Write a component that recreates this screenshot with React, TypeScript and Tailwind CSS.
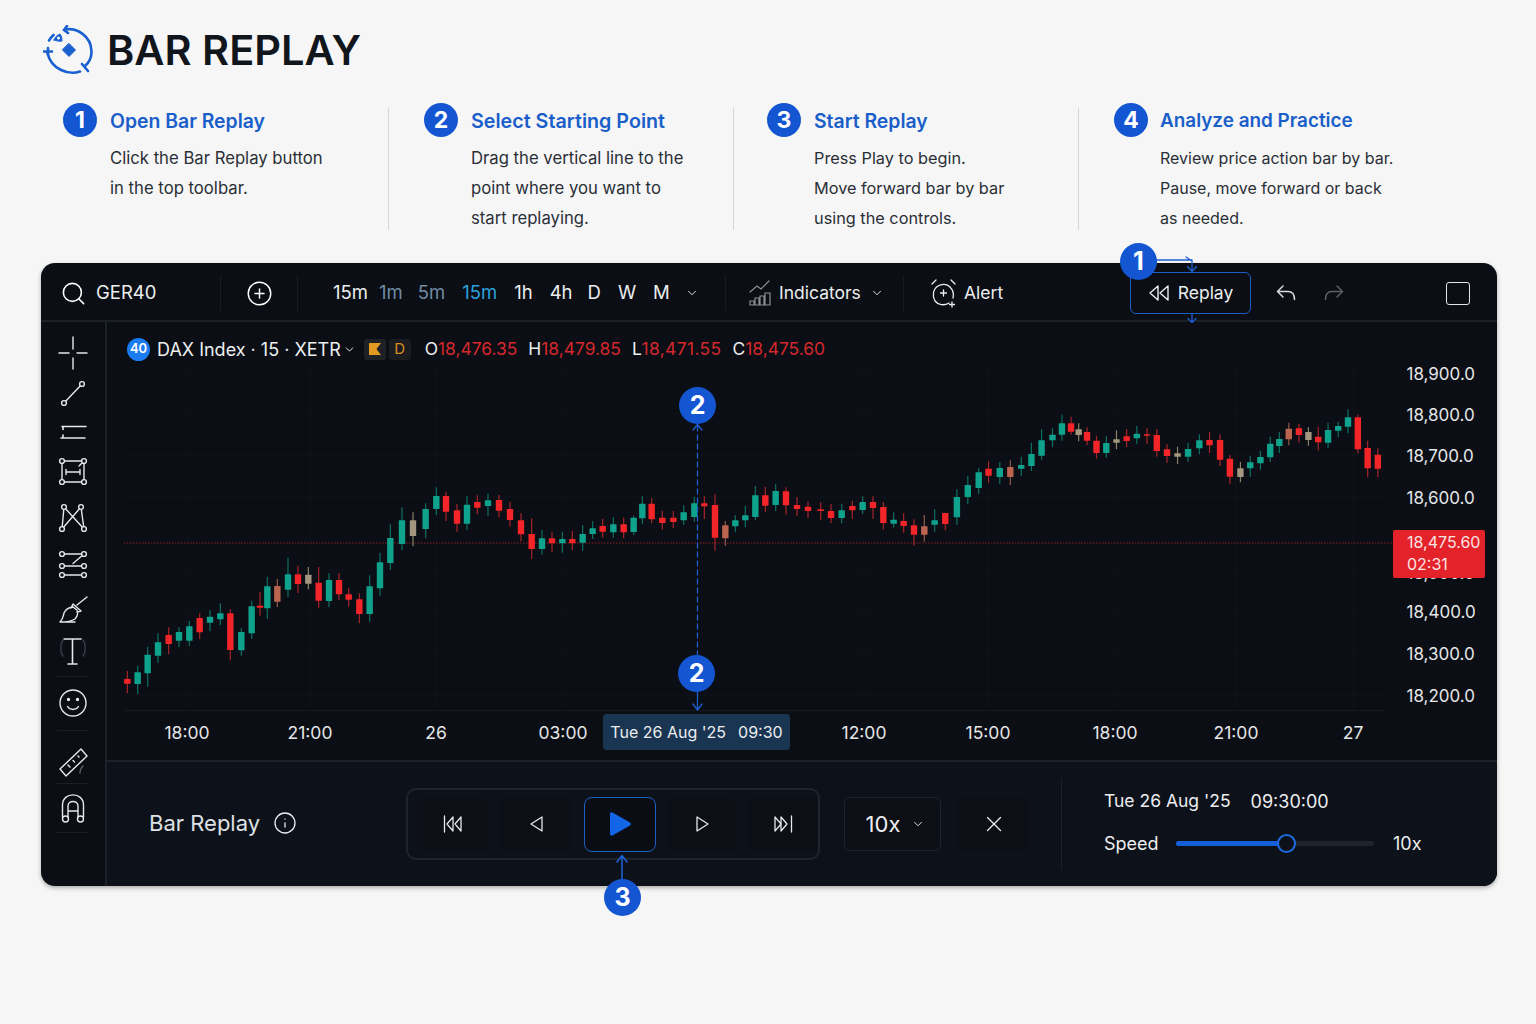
import { ChevronDown, Info, Search, CirclePlus, X } from "lucide-react";

type Kind = "r" | "g" | "t" | "o";
type Raw = [number, number, number, number, number, Kind];

// candle readings, grouped by the crop they were read from
const groupA: Raw[] = [
  [52, 627, 641, 603, 670, "r"], [83, 607, 642, 587, 672, "g"], [113, 554, 610, 530, 650, "g"], [144, 517, 557, 490, 578, "g"],
  [176, 495, 522, 472, 553, "r"], [207, 486, 512, 472, 532, "g"], [238, 469, 512, 452, 528, "g"], [269, 444, 487, 430, 507, "r"],
  [300, 440, 458, 421, 484, "g"], [331, 430, 448, 400, 465, "g"], [361, 430, 540, 418, 571, "r"], [394, 486, 541, 474, 557, "g"],
  [425, 409, 490, 392, 507, "g"], [450, 407, 413, 366, 437, "r"], [472, 349, 415, 320, 447, "g"], [502, 348, 395, 327, 411, "o"],
  [534, 313, 359, 264, 381, "g"], [564, 313, 342, 287, 369, "r"], [595, 314, 341, 291, 358, "t"], [626, 338, 392, 291, 413, "r"],
  [657, 330, 393, 310, 412, "g"], [687, 330, 373, 309, 391, "r"], [716, 373, 389, 353, 410, "r"], [748, 388, 432, 370, 460, "r"],
  [779, 349, 432, 316, 455, "g"], [810, 277, 355, 248, 377, "g"], [841, 204, 279, 163, 299, "g"], [876, 151, 222, 112, 241, "g"],
  [909, 151, 198, 127, 229, "t"], [947, 117, 177, 100, 205, "g"], [979, 78, 117, 52, 135, "g"], [1008, 78, 125, 65, 153, "r"],
  [1041, 121, 161, 102, 185, "r"], [1071, 104, 161, 78, 180, "g"], [1102, 96, 113, 76, 132, "r"], [1134, 91, 108, 71, 138, "g"],
  [1167, 90, 122, 75, 142, "r"], [1200, 117, 150, 95, 170, "r"], [1233, 151, 193, 130, 214, "r"],
];
const groupB: Raw[] = [
  [35, 192, 237, 145, 267, "r"], [66, 205, 237, 180, 254, "g"], [96, 205, 220, 185, 246, "r"], [127, 207, 220, 185, 248, "g"],
  [157, 207, 220, 183, 240, "r"], [188, 192, 218, 165, 242, "g"], [218, 175, 192, 154, 207, "g"], [248, 168, 185, 146, 203, "r"],
  [280, 163, 187, 142, 203, "g"], [311, 163, 187, 143, 205, "r"], [341, 143, 186, 137, 195, "g"], [367, 101, 145, 79, 163, "g"],
  [395, 101, 148, 85, 160, "r"], [427, 143, 159, 122, 179, "r"], [460, 143, 156, 123, 175, "r"], [491, 127, 151, 106, 165, "g"],
  [523, 100, 141, 80, 155, "g"], [553, 100, 109, 79, 147, "r"], [585, 105, 203, 73, 242, "r"], [616, 166, 205, 153, 228, "o"],
  [646, 151, 169, 136, 187, "g"], [676, 136, 151, 108, 172, "g"], [706, 76, 141, 48, 150, "g"], [736, 76, 107, 50, 126, "r"],
  [767, 63, 105, 42, 123, "g"], [798, 64, 106, 52, 134, "r"], [831, 105, 117, 81, 138, "r"], [864, 110, 123, 94, 144, "r"],
  [902, 118, 123, 97, 150, "r"], [933, 123, 144, 102, 160, "r"], [965, 121, 144, 101, 160, "g"], [997, 108, 121, 92, 147, "r"],
  [1028, 96, 120, 79, 132, "g"], [1059, 96, 114, 79, 147, "r"], [1090, 111, 159, 96, 179, "r"], [1121, 149, 161, 127, 173, "g"],
  [1151, 153, 168, 130, 188, "r"], [1182, 166, 194, 148, 227, "r"], [1213, 169, 194, 135, 215, "o"], [1244, 151, 164, 118, 185, "g"],
];
const groupC: Raw[] = [
  [42, 339, 372, 338, 391, "r"], [74, 291, 352, 268, 374, "g"], [104, 255, 291, 227, 312, "g"], [134, 217, 264, 203, 282, "g"],
  [161, 206, 227, 184, 248, "r"], [192, 204, 231, 186, 252, "g"], [221, 201, 231, 181, 255, "o"], [251, 195, 206, 170, 228, "g"],
  [279, 162, 198, 128, 213, "g"], [307, 121, 167, 88, 180, "g"], [337, 104, 121, 85, 142, "g"], [363, 70, 104, 44, 122, "g"],
  [388, 70, 95, 50, 104, "r"], [409, 88, 105, 70, 124, "t"], [432, 96, 122, 82, 136, "r"], [458, 122, 159, 107, 176, "r"],
  [485, 129, 159, 108, 173, "g"], [513, 118, 128, 91, 148, "t"], [541, 109, 123, 87, 142, "r"], [569, 101, 115, 78, 132, "g"],
  [597, 103, 107, 84, 132, "r"], [624, 105, 153, 87, 170, "r"], [652, 148, 168, 133, 189, "r"], [681, 160, 170, 140, 192, "t"],
  [710, 147, 170, 128, 186, "g"], [741, 121, 145, 103, 163, "g"], [769, 120, 136, 97, 159, "r"], [798, 120, 179, 103, 198, "r"],
  [825, 176, 230, 165, 252, "r"], [854, 205, 231, 186, 247, "t"], [881, 187, 205, 168, 230, "g"], [909, 171, 190, 152, 209, "g"],
  [936, 131, 172, 110, 186, "g"], [961, 117, 138, 95, 159, "g"], [987, 86, 118, 68, 136, "o"], [1015, 85, 105, 72, 128, "r"],
  [1041, 96, 120, 82, 137, "t"], [1068, 110, 127, 80, 152, "r"], [1095, 90, 128, 68, 144, "g"], [1123, 78, 92, 65, 112, "g"],
  [1150, 52, 80, 28, 99, "g"], [1177, 52, 148, 44, 160, "r"], [1204, 144, 205, 122, 232, "r"], [1232, 164, 206, 145, 231, "r"],
];

const bodyColor: Record<Kind, string> = { r: "#f42528", g: "#0fa38d", t: "#a3977f", o: "#bb6550" };
const wickColor: Record<Kind, string> = { r: "#a5252a", g: "#0c6f63", t: "#8b8069", o: "#94584a" };

const candles = [
  ...groupA.map((c) => ({ x: 110 + c[0] / 3, oy: 470, c })),
  ...groupB.map((c) => ({ x: 520 + c[0] / 3, oy: 470, c })),
  ...groupC.map((c) => ({ x: 930 + c[0] / 2.751, oy: 400, c })),
];

const prices = [
  { label: "18,900.0", y: 375 }, { label: "18,800.0", y: 416 }, { label: "18,700.0", y: 457 }, { label: "18,600.0", y: 499 },
  { label: "18,500.0", y: 574 }, { label: "18,400.0", y: 613 }, { label: "18,300.0", y: 655 }, { label: "18,200.0", y: 697 },
];
const times = [
  { label: "18:00", x: 187 }, { label: "21:00", x: 310 }, { label: "26", x: 436 }, { label: "03:00", x: 563 },
  { label: "12:00", x: 864 }, { label: "15:00", x: 988 }, { label: "18:00", x: 1115 }, { label: "21:00", x: 1236 }, { label: "27", x: 1353 },
];

const steps = [
  { n: 1, title: "Open Bar Replay", lines: ["Click the Bar Replay button", "in the top toolbar."], cls: "w-[325px]", titleCls: "text-[19.400px]", bodyCls: "text-[16.700px]" },
  { n: 2, title: "Select Starting Point", lines: ["Drag the vertical line to the", "point where you want to", "start replaying."], cls: "w-[344px] pl-[35px]", titleCls: "text-[19.700px]", bodyCls: "text-[16.700px]" },
  { n: 3, title: "Start Replay", lines: ["Press Play to begin.", "Move forward bar by bar", "using the controls."], cls: "w-[344px] pl-[33px]", titleCls: "text-[19.400px]", bodyCls: "text-[16.300px]" },
  { n: 4, title: "Analyze and Practice", lines: ["Review price action bar by bar.", "Pause, move forward or back", "as needed."], cls: "pl-[35px]", titleCls: "-ml-px text-[18.900px]", bodyCls: "-ml-px text-[16px]" },
];

function Badge({ n, className }: { n: number; className: string }) {
  return (
    <div className={`absolute flex h-[37px] w-[37px] items-center justify-center rounded-full bg-[#1456d2] text-[25px] font-bold text-white ${className}`}>
      {n}
    </div>
  );
}

function LogoIcon() {
  return (
    <svg width="50" height="50" viewBox="0 0 50 50" fill="none" stroke="#1a5fd0" strokeWidth="2.6" strokeLinecap="round">
      <path d="M22 4.500C34 2.500 48 11 48.500 26c.2 7-3 12-6.500 15M37 46.500C25 50.500 8 44 4.500 28M6 15.500c1.500-2.500 3-4 4.500-5.500" />
      <path d="M24 1l-3 4 4 3M1 26.500h8M5 23v7M39 39l6 7" />
      <path d="M26 18.500l6.500 6.500-6.500 6.500-6.500-6.500z" fill="#1a5fd0" strokeWidth="1" />
      <path d="M11 15c1.500-3.500 3.500-5 6-6 1.500 2 2 4 2 7-3 .5-5.500 0-8-1z" fill="#1a5fd0" strokeWidth="1" />
      <circle cx="15.500" cy="13" r="1.500" fill="#f6f6f7" stroke="none" />
    </svg>
  );
}

function ToolIcon({ children, className = "" }: { children: React.ReactNode; className?: string }) {
  return (
    <svg width="36" height="36" viewBox="0 0 36 36" fill="none" stroke="#e6e8ea" strokeWidth="1.400" strokeLinecap="round" strokeLinejoin="round" className={className}>
      {children}
    </svg>
  );
}

function Dots({ pts }: { pts: [number, number][] }) {
  return (
    <>
      {pts.map(([x, y]) => (
        <circle key={`${x}-${y}`} cx={x} cy={y} r="2.400" fill="#0b0e14" />
      ))}
    </>
  );
}

function Sidebar() {
  return (
    <div className="flex w-[66px] shrink-0 flex-col items-center border-r-2 border-[#1c2027] pt-[13px]">
      <ToolIcon><path d="M4 18h10M22 18h10M18 2v12M18 23v11" /></ToolIcon>
      <ToolIcon className="mt-[5px]">
        <path d="M9 27L27 8" /><Dots pts={[[9, 27], [27, 8]]} />
      </ToolIcon>
      <ToolIcon className="mt-[2px]">
        <path d="M7 12.500h24M6 24h24M8 12.500v3M8 21v3" strokeWidth="1.600" />
      </ToolIcon>
      <ToolIcon className="mt-[3px]">
        <path d="M7 8h22v21H7zM11 19h14M11 16.500v5M25 16.500v5M24 13l4-4" />
        <Dots pts={[[7, 8], [29, 8], [7, 29], [29, 29]]} />
      </ToolIcon>
      <ToolIcon className="mt-[10px]">
        <path d="M9 8l20 22M26 8L7 30M9 8L7 30M26 8l3 22" />
        <Dots pts={[[9, 8], [26, 8], [7, 30], [29, 30]]} />
      </ToolIcon>
      <ToolIcon className="mt-[12px]">
        <path d="M7 7h22L18 16.500M7 19h22M7 28h22" />
        <Dots pts={[[7, 7], [29, 7], [7, 19], [29, 19], [7, 28], [29, 28]]} />
      </ToolIcon>
      <ToolIcon className="mt-[7px]">
        <path d="M5 32c6 0 12-1 15-3 3-3 3-7 2-9l-4-3c-4 0-8 3-9 6-1 4-1 6-4 9zM5 32h15M16 18l2-4 8 7-4 1M22 15l10-8" />
      </ToolIcon>
      <ToolIcon className="mt-[6px]">
        <path d="M9 7h17M17.500 7v25M13 32h9" strokeWidth="1.600" />
        <path d="M8 8c-3 4-3 12 0 16M28 8c3 4 3 12 0 16" stroke="#3a3f47" />
      </ToolIcon>
      <div className="mt-[8px] h-px w-[32px] bg-[#1a1e25]" />
      <ToolIcon className="mt-[8px]">
        <circle cx="18" cy="18" r="13" /><path d="M12.500 21.500c2.500 4 8.500 4 11 0" />
        <circle cx="13.500" cy="14.500" r="1" fill="#e6e8ea" /><circle cx="22.500" cy="14.500" r="1" fill="#e6e8ea" />
      </ToolIcon>
      <div className="mt-[9px] h-px w-[32px] bg-[#1a1e25]" />
      <ToolIcon className="mt-[10px]">
        <path d="M5 31L26 11l6 7-21 20z" transform="translate(0 -3)" />
        <path d="M13 24l2 2M18 19.500l1.500 1.500M23 15l1 1" />
        <path d="M25 32c0-3 1-5 3-7" stroke="#5a5f66" />
      </ToolIcon>
      <div className="mt-[6px] h-px w-[32px] bg-[#1a1e25]" />
      <ToolIcon className="mt-[6px]">
        <path d="M7.500 27V15c0-13.500 21-13.500 21 0v12M13 27V16c0-6 10-6 10 0v11M13 21h10" />
        <circle cx="10.500" cy="29" r="3" /><circle cx="25.500" cy="29" r="3" />
      </ToolIcon>
      <div className="mt-[6px] h-px w-[32px] bg-[#1a1e25]" />
    </div>
  );
}

function Toolbar() {
  return (
    <div className="flex h-[59px] shrink-0 items-center border-b-2 border-[#1c2027] pt-[3px] text-[18.500px] text-[#eceef0]">
      <div className="flex w-[179px] items-center pl-[19px]">
        <Search size={27} strokeWidth={1.400} className="text-white" />
        <span className="ml-[9px]">GER40</span>
      </div>
      <div className="h-[36px] w-px bg-[#181c22]" />
      <div className="flex w-[76px] justify-center">
        <CirclePlus size={27} strokeWidth={1.300} className="text-white" />
      </div>
      <div className="h-[36px] w-px bg-[#181c22]" />
      <div className="flex w-[427px] items-center pl-[35px]">
        <span>15m</span>
        <span className="ml-[11px] text-[#6f8ba3]">1m</span>
        <span className="ml-[15px] text-[#6f8ba3]">5m</span>
        <span className="ml-[17px] text-[#2ba0dc]">15m</span>
        <span className="ml-[17px]">1h</span>
        <span className="ml-[17px]">4h</span>
        <span className="ml-[15px]">D</span>
        <span className="ml-[17px]">W</span>
        <span className="ml-[17px]">M</span>
        <ChevronDown size={14} strokeWidth={1.600} className="ml-[15px]" />
      </div>
      <div className="h-[36px] w-px bg-[#181c22]" />
      <div className="flex w-[177px] items-center pl-[22px] text-[17.500px]">
        <svg width="24" height="26" viewBox="0 0 24 26" fill="none" stroke="#8b9096" strokeWidth="1.200" strokeLinecap="round">
          <path d="M2 12l7-6 4 3 8-8M2 25v-4h4v4zM7 25v-7h4v7zM12 25v-9h4v9zM17 25V13h5v12z" />
        </svg>
        <span className="ml-[7px]">Indicators</span>
        <ChevronDown size={14} strokeWidth={1.600} className="ml-[9px]" />
      </div>
      <div className="h-[36px] w-px bg-[#181c22]" />
      <div className="flex w-[226px] items-center pl-[26px] text-[17.500px]">
        <svg width="27" height="30" viewBox="0 0 27 30" fill="none" stroke="#eceef0" strokeWidth="1.300" strokeLinecap="round">
          <path d="M19 25c-5 3-11 2-14-2-3-5-2-12 3-15 4-2.500 9-2 12 1 3 3 4 7 3 11" />
          <path d="M2 6l4-4M25 6l-4-4M13.500 12v6M10.500 15h6M22 24v5M19.500 26.500h5" />
        </svg>
        <span className="ml-[7px]">Alert</span>
      </div>
      <div className="flex h-[42px] w-[121px] items-center justify-center rounded-[6px] border border-[#1c5fc4] text-[17.500px]">
        <svg width="22" height="18" viewBox="0 0 22 18" fill="none" stroke="#eceef0" strokeWidth="1.400" strokeLinejoin="round">
          <path d="M10 2L2 9l8 7zM20 2l-8 7 8 7z" />
        </svg>
        <span className="ml-[8px]">Replay</span>
      </div>
      <svg width="22" height="22" viewBox="0 0 22 22" fill="none" stroke="#d8dadd" strokeWidth="1.500" strokeLinecap="round" strokeLinejoin="round" className="ml-[24px]">
        <path d="M8 4L2.500 9.500 8 15M2.500 9.500H13c4 0 6.500 2.500 6.500 8" />
      </svg>
      <svg width="22" height="22" viewBox="0 0 22 22" fill="none" stroke="#5b6067" strokeWidth="1.500" strokeLinecap="round" strokeLinejoin="round" className="ml-[26px]">
        <path d="M14 4l5.500 5.500L14 15M19.500 9.500H9c-4 0-6.500 2.500-6.500 8" />
      </svg>
      <div className="ml-[101px] h-[23px] w-[24px] rounded-[3px] border-[1.500px] border-[#e3e5e7]" />
    </div>
  );
}

function Chart() {
  return (
    <div className="relative h-[438px] shrink-0 overflow-hidden rounded-tl-[6px]">
      {/* chart drawing, coordinates are page pixels */}
      <svg className="absolute inset-0" width="1390" height="438" viewBox="107 322 1390 438" fill="none">
        {[373, 414, 455, 497, 570, 611, 653, 695].map((y) => (
          <path key={y} d={`M124 ${y}H1385`} stroke="#ffffff" strokeOpacity="0.025" />
        ))}
        {[187, 310, 436, 563, 864, 988, 1115, 1236, 1353].map((x) => (
          <path key={x} d={`M${x} 365V710`} stroke="#ffffff" strokeOpacity="0.025" />
        ))}
        <path d="M124 710.500H1385" stroke="#ffffff" strokeOpacity="0.05" />
        <path d="M124 543H1393" stroke="#8c2127" strokeDasharray="1.500 1.500" />
        {candles.map(({ x, oy, c }) => {
          const [, top, bot, wt, wb, kind] = c;
          return (
            <g key={`${x}`}>
              <path d={`M${x} ${oy + wt / 3}V${oy + wb / 3}`} stroke={wickColor[kind]} strokeWidth="1.200" />
              <rect x={x - 3.200} y={oy + top / 3} width="6.400" height={(bot - top) / 3} rx="0.500" fill={bodyColor[kind]} />
            </g>
          );
        })}
      </svg>

      <div className="relative flex h-[54px] items-center pl-[20px] text-[18px] text-[#eceef0]">
        <div className="flex h-[23px] w-[23px] items-center justify-center rounded-full bg-[#1b7cf0] text-[13px] font-semibold text-white">40</div>
        <span className="ml-[7px]">DAX Index · 15 · XETR</span>
        <ChevronDown size={13} strokeWidth={1.800} className="ml-[2px]" />
        <div className="ml-[8px] flex h-[21px] w-[22px] items-center justify-center rounded-[3px] bg-[#1e2126]">
          <svg width="14" height="14" viewBox="0 0 14 14"><path d="M1 1h12L8.500 7 13 13H1z" fill="#e39a22" /></svg>
        </div>
        <div className="ml-[3px] flex h-[21px] w-[22px] items-center justify-center rounded-[3px] bg-[#1a1c20] text-[15px] text-[#d98d1f]">D</div>
        <div className="ml-[14px] flex text-[17.400px]">
          <span>O<span className="text-[#d4282d]">18,476.35</span></span>
          <span className="ml-[11px]">H<span className="text-[#d4282d]">18,479.85</span></span>
          <span className="ml-[11px] tracking-[0.4px]">L<span className="text-[#d4282d]">18,471.55</span></span>
          <span className="ml-[11px]">C<span className="text-[#d4282d]">18,475.60</span></span>
        </div>
      </div>

      {prices.map((p) => (
        <span key={p.y} className="absolute left-[1299.500px] -translate-y-1/2 text-[17px] text-[#e4e6e8]" style={{ top: p.y - 322 }}>
          {p.label}
        </span>
      ))}
      <div className="absolute left-[1286px] top-[208px] flex h-[48px] w-[92px] flex-col justify-center rounded-[2px] bg-[#e4222a] pb-[2px] pl-[14px] text-[16px] leading-[22px] text-[#fbe4e4]">
        <span>18,475.60</span>
        <span>02:31</span>
      </div>

      {times.map((t) => (
        <span key={t.x} className="absolute top-[398px] -translate-x-1/2 text-[17.500px] text-[#e4e6e8]" style={{ left: t.x - 107 }}>
          {t.label}
        </span>
      ))}
      <div className="absolute left-[496px] top-[392px] flex h-[36px] w-[187px] items-center justify-center whitespace-nowrap rounded-[4px] bg-[#1a3552] text-[16px] text-[#eceef0]">
        <span>Tue 26 Aug '25</span>
        <span className="ml-[12px]">09:30</span>
      </div>
    </div>
  );
}

function TransportIcon({ d }: { d: string }) {
  return (
    <svg width="24" height="24" viewBox="0 0 24 24" fill="none" stroke="#e6e8ea" strokeWidth="1.300" strokeLinejoin="round" strokeLinecap="round">
      <path d={d} />
    </svg>
  );
}

function ReplayPanel() {
  return (
    <div className="flex h-[126px] flex-1 items-center border-t-2 border-[#1c2027] bg-[#0d1119] pl-[42px] text-[#eceef0]">
      <div className="mb-[2px] flex w-[257px] items-center">
        <span className="text-[22px] text-[#dfe2e5]">Bar Replay</span>
        <Info size={24} strokeWidth={1.300} className="ml-[13px]" />
      </div>
      <div className="flex h-[72px] w-[414px] items-center rounded-[10px] border-2 border-[#20252d] pl-[9px]">
        <div className="flex h-[53px] w-[72px] items-center justify-center rounded-[8px] bg-[#0c0f15]">
          <TransportIcon d="M3.500 4v16M12 5l-6 7 6 7zM20 5l-6 7 6 7z" />
        </div>
        <div className="ml-[11px] flex h-[53px] w-[71px] items-center justify-center rounded-[8px] bg-[#0c0f15]">
          <TransportIcon d="M18 5l-11 7 11 7z" />
        </div>
        <div className="ml-[13px] flex h-[55px] w-[72px] items-center justify-center rounded-[8px] border border-[#1c5fc4] bg-[#0a0d13]">
          <svg width="24" height="26" viewBox="0 0 24 26"><path d="M2 3c0-1.500 1.500-2 2.500-1.500l17.500 10c1 .7 1 2.300 0 3l-17.500 10C3.500 25 2 24.500 2 23z" fill="#1266e6" /></svg>
        </div>
        <div className="ml-[12px] flex h-[53px] w-[69px] items-center justify-center rounded-[8px] bg-[#0c0f15]">
          <TransportIcon d="M6 5l11 7-11 7z" />
        </div>
        <div className="ml-[11px] flex h-[53px] w-[69px] items-center justify-center rounded-[8px] bg-[#0c0f15]">
          <TransportIcon d="M4 5l6 7-6 7zM10 5l6 7-6 7zM20.500 4v16" />
        </div>
      </div>
      <div className="ml-[24px] flex h-[54px] w-[97px] items-center justify-center rounded-[6px] border border-[#1f242b] bg-[#0c0f15] pl-[6px]">
        <span className="text-[22px]">10x</span>
        <ChevronDown size={14} strokeWidth={1.600} className="ml-[11px]" />
      </div>
      <div className="ml-[17px] flex h-[54px] w-[71px] items-center justify-center rounded-[8px] bg-[#0c0f15]">
        <X size={26} strokeWidth={1.200} />
      </div>
      <div className="ml-[32px] h-[92px] w-px bg-[#1c2027]" />
      <div className="mb-[3px] ml-[42px] flex flex-col text-[18px]">
        <div className="flex">
          <span className="text-[17.500px]">Tue 26 Aug '25</span>
          <span className="ml-[20px]">09:30:00</span>
        </div>
        <div className="mt-[15px] flex items-center">
          <span className="w-[72px]">Speed</span>
          <div className="relative h-[5px] w-[198px] rounded-full bg-[#20252c]">
            <div className="h-full w-[110px] rounded-full bg-[#1560d8]" />
            <div className="absolute left-[101px] top-[-7px] h-[19px] w-[19px] rounded-full border-2 border-[#1c6ae0] bg-[#0d1119]" />
          </div>
          <span className="ml-[19px]">10x</span>
        </div>
      </div>
    </div>
  );
}

export default function App() {
  return (
    <div className="h-[1024px] w-[1536px] overflow-hidden bg-[#f6f6f7] font-['Inter',sans-serif]">
      <div className="flex items-center pl-[43px] pt-[25px]">
        <LogoIcon />
        <h1 className="ml-[14px] text-[41.500px] font-semibold leading-[50px] text-[#11161d]">BAR REPLAY</h1>
      </div>

      <div className="mt-[28px] flex h-[127px] pl-[63px]">
        {steps.map((s, i) => (
          <div key={s.n} className="flex">
            {i > 0 && <div className="mt-[5px] h-[122px] w-px bg-[#d5d6d9]" />}
            <div className={`flex gap-[13px] ${s.cls}`}>
              <div className="flex h-[34px] w-[34px] items-center justify-center rounded-full bg-[#1456d2] text-[23px] font-bold text-white">{s.n}</div>
              <div>
                <div className={`font-semibold leading-[36px] text-[#1a5ec9] ${s.titleCls}`}>{s.title}</div>
                <div className={`mt-[4px] leading-[30px] text-[#2a2f36] ${s.bodyCls}`}>
                  {s.lines.map((l) => (
                    <div key={l}>{l}</div>
                  ))}
                </div>
              </div>
            </div>
          </div>
        ))}
      </div>

      <div className="relative ml-[41px] mt-[33px] flex h-[623px] w-[1456px] flex-col rounded-[14px] bg-[#0b0e14] shadow-[0_2px_4px_rgba(0,0,0,0.3)]">
        <Toolbar />
        <div className="flex min-h-0 flex-1">
          <Sidebar />
          <div className="flex min-w-0 flex-1 flex-col overflow-hidden rounded-br-[14px]">
            <Chart />
            <ReplayPanel />
          </div>
        </div>

        {/* callouts over the panel */}
        <svg className="pointer-events-none absolute inset-0 overflow-visible" width="1456" height="623" viewBox="41 263 1456 623" fill="none" stroke="#1c5fcf" strokeWidth="1.300" strokeLinecap="round" strokeLinejoin="round">
          <path d="M1155 260H1192V271M1187.500 266.500L1192 271.500L1196.500 266.500M1186 257L1192 261" />
          <path d="M1192 314V322M1188 318.500L1192 322.500L1196 318.500" />
          <path d="M697.500 426V655" strokeDasharray="5 4" />
          <path d="M693 430L697.500 424.500L702 430" />
          <path d="M697.500 690V709M693 704L697.500 710L702 704" />
          <path d="M622 880V856M617 862L622 855.500L627 862" strokeWidth="1.600" />
        </svg>
        <Badge n={1} className="left-[1079px] top-[-20px]" />
        <Badge n={2} className="left-[638px] top-[124px]" />
        <Badge n={2} className="left-[637px] top-[392px]" />
        <Badge n={3} className="left-[563px] top-[616px]" />
      </div>
    </div>
  );
}
